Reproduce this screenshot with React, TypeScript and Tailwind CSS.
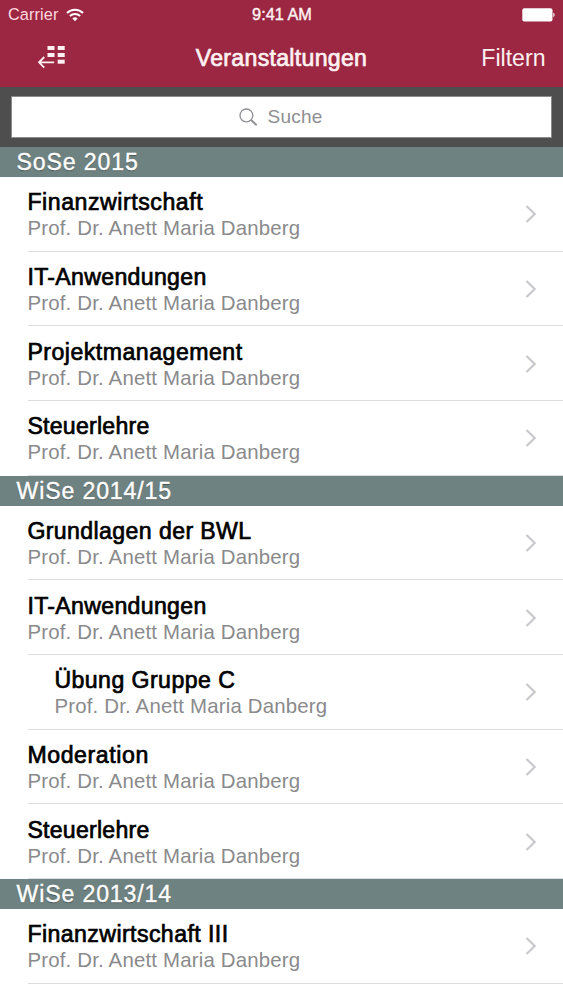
import React from 'react';

interface ICourse {
  name: string;
  lecturer: string;
  spacing: string;
  nested?: boolean;
}

interface ISemester {
  title: string;
  courses: ICourse[];
}

const lecturer = 'Prof. Dr. Anett Maria Danberg';

const semesters: ISemester[] = [
  {
    title: 'SoSe 2015',
    courses: [
      { name: 'Finanzwirtschaft', lecturer, spacing: 'tracking-[0.56px]' },
      { name: 'IT-Anwendungen', lecturer, spacing: 'tracking-[0.33px]' },
      { name: 'Projektmanagement', lecturer, spacing: 'tracking-[0.5px]' },
      { name: 'Steuerlehre', lecturer, spacing: 'tracking-[0.25px]' },
    ],
  },
  {
    title: 'WiSe 2014/15',
    courses: [
      { name: 'Grundlagen der BWL', lecturer, spacing: 'tracking-[0.4px]' },
      { name: 'IT-Anwendungen', lecturer, spacing: 'tracking-[0.33px]' },
      { name: 'Übung Gruppe C', lecturer, spacing: 'tracking-[0.45px]', nested: true },
      { name: 'Moderation', lecturer, spacing: 'tracking-[0.6px]' },
      { name: 'Steuerlehre', lecturer, spacing: 'tracking-[0.25px]' },
    ],
  },
  {
    title: 'WiSe 2013/14',
    courses: [{ name: 'Finanzwirtschaft III', lecturer, spacing: 'tracking-[0.43px]' }],
  },
];

const Wifi = () => (
  <svg width="18" height="14" viewBox="0 0 18 14" fill="none" stroke="currentColor" strokeWidth="2">
    <path d="M1 5a11.2 11.2 0 0 1 16 0" />
    <path d="M3.9 8a7.2 7.2 0 0 1 10.2 0" />
    <path d="M9 13.2 6.4 10.5a3.7 3.7 0 0 1 5.2 0Z" fill="currentColor" stroke="none" />
  </svg>
);

const Battery = () => (
  <svg width="34" height="14" viewBox="0 0 34 14" fill="currentColor">
    <rect x="0.3" y="0.3" width="30.2" height="13.2" rx="2" />
    <path d="M31.3 4.8c1.7.4 1.7 3.9 0 4.3Z" />
  </svg>
);

const BackToMenu = () => (
  <svg width="28" height="24" viewBox="0 0 28 24" fill="currentColor">
    <rect x="9.5" y="1" width="7" height="4" />
    <rect x="19.7" y="1" width="7" height="4" />
    <rect x="9.5" y="8" width="7" height="4" />
    <rect x="19.7" y="8" width="7" height="4" />
    <rect x="19.7" y="14.7" width="7" height="4" />
    <path d="M16.2 17.3H1.2M6.3 12 1 17.3l5.3 5.3" fill="none" stroke="currentColor" strokeWidth="1.8" />
  </svg>
);

const SearchIcon = () => (
  <svg width="19" height="19" viewBox="0 0 19 19" fill="none" stroke="#8e8e93">
    <circle cx="7.4" cy="7.4" r="6.4" strokeWidth="1.3" />
    <path d="m12 12 5.7 5.3" strokeWidth="1.9" />
  </svg>
);

const Chevron = () => (
  <svg width="12" height="18" viewBox="0 0 12 18" fill="none" stroke="#c7c7cc" strokeWidth="2.1">
    <path d="m1.5 1 8.2 8-8.2 8" />
  </svg>
);

const Header = () => (
  <header className="h-[87px] bg-[#9b2743] text-[#fff1f1]">
    <div className="grid h-[29px] grid-cols-3 items-center pl-[8px] pr-[7px] text-[16.3px]">
      <div className="flex items-center gap-[8px] text-[#ffd9df]">
        <span className="tracking-[0.1px]">Carrier</span>
        <span className="text-white"><Wifi /></span>
      </div>
      <span className="text-center [-webkit-text-stroke:0.4px]">9:41 AM</span>
      <div className="flex justify-end text-white">
        <Battery />
      </div>
    </div>
    <div className="grid h-[58px] grid-cols-[1fr_auto_1fr] items-center pl-[37.5px] pr-[17.5px] text-[23.1px]">
      <button type="button" title="Menü" className="-mt-[3px] justify-self-start text-[#fff1f1]">
        <BackToMenu />
      </button>
      <h1 className="-ml-5 tracking-[0.3px] [-webkit-text-stroke:0.7px]">Veranstaltungen</h1>
      <button type="button" className="justify-self-end">Filtern</button>
    </div>
  </header>
);

const SearchBar = () => (
  <div className="h-[60px] bg-[#4f4e4f] px-[11px] pt-[9px]">
    <div className="flex h-[42px] items-center justify-center gap-[10px] border border-[#8b8b8b] bg-white pr-[2px] text-[19px] tracking-[0.2px] text-[#8e8e93]">
      <SearchIcon />
      <span>Suche</span>
    </div>
  </div>
);

const Divider = () => <div className="-mt-px ml-[28px] h-px bg-[#dddddf]" />;

const CourseRow = ({ name, lecturer, spacing, nested }: ICourse) => (
  <li>
    <div
      className={`flex h-[74.7px] items-center justify-between pr-[26px] ${nested ? 'pl-[54.4px]' : 'pl-[27.4px]'}`}
    >
      <div className="pt-[2px]">
        <h3 className={`text-[23.1px] leading-[26px] text-black [-webkit-text-stroke:0.7px] ${spacing}`}>
          {name}
        </h3>
        <p className="text-[20.4px] leading-[26px] tracking-[0.19px] text-[#8a8a8c]">{lecturer}</p>
      </div>
      <Chevron />
    </div>
    <Divider />
  </li>
);

const App = () => {
  return (
    <div className="h-[1000px] w-[563px] overflow-hidden bg-white font-['Liberation_Sans',Arial,sans-serif]">
      <Header />
      <SearchBar />
      {semesters.map((semester) => (
        <section key={semester.title}>
          <h2 className="h-[29.9px] bg-[#6f8282] pl-[16.5px] text-[23.1px] leading-[30px] tracking-[0.87px] text-white [-webkit-text-stroke:0.4px] [text-shadow:0_1px_1px_rgba(0,0,0,0.4)]">
            {semester.title}
          </h2>
          <ul>
            {semester.courses.map((course) => (
              <CourseRow key={course.name} {...course} />
            ))}
          </ul>
        </section>
      ))}
    </div>
  );
};

export default App;
